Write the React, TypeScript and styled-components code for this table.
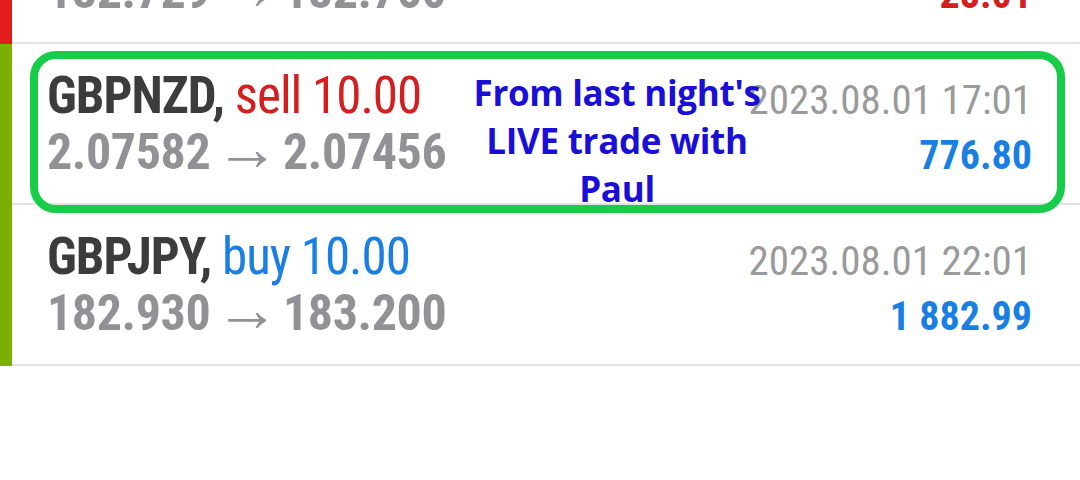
import React from 'react';
import styled, { createGlobalStyle } from 'styled-components';

const GlobalStyle = createGlobalStyle`
  html, body {
    margin: 0;
    padding: 0;
    background: #ffffff;
  }
  body {
    font-family: Roboto, 'Liberation Sans', sans-serif;
    overflow: hidden;
  }
`;

const Page = styled.div`
  position: relative;
  width: 1080px;
  height: 480px;
  overflow: hidden;
`;

const List = styled.div`
  margin-top: -117px;
`;

const Row = styled.div`
  display: flex;
  height: 161px;
`;

const Bar = styled.div<{ $color: string }>`
  width: 12px;
  flex: none;
  background: ${(p) => p.$color};
`;

const Content = styled.div`
  flex: 1;
  display: flex;
  justify-content: space-between;
  padding: 0 48px 0 35px;
  border-bottom: 2px solid #e3e3e3;
`;

const Left = styled.div`
  padding-top: 24px;
  font-stretch: 75%;
`;

const Right = styled.div`
  padding-top: 28px;
  text-align: right;
  font-stretch: 75%;
`;

const Title = styled.div`
  font-size: 51px;
  line-height: 56px;
  letter-spacing: -1px;
  white-space: nowrap;
`;

const Symbol = styled.span`
  font-weight: 700;
  color: #3c3c3c;
`;

const Side = styled.span<{ $color: string }>`
  font-weight: 400;
  color: ${(p) => p.$color};
`;

const Prices = styled.div`
  height: 56px;
  font-size: 50px;
  line-height: 56px;
  font-weight: 700;
  letter-spacing: -0.4px;
  color: #929296;
  white-space: nowrap;
`;

const Arrow = styled.span`
  font-weight: 400;
  font-stretch: 100%;
  font-size: 64px;
  line-height: 40px;
  margin: 0 4px 0 5px;
  vertical-align: -1px;
`;

const Time = styled.div`
  font-size: 41px;
  line-height: 56px;
  color: #9a9a9a;
  white-space: nowrap;
`;

const Profit = styled.div<{ $color: string }>`
  font-size: 40px;
  line-height: 56px;
  font-weight: 700;
  color: ${(p) => p.$color};
  white-space: nowrap;
`;

const Highlight = styled.div`
  position: absolute;
  left: 30px;
  top: 51px;
  width: 1035px;
  height: 162px;
  box-sizing: border-box;
  border: 8px solid #17cc48;
  border-radius: 26px;
  pointer-events: none;
`;

const Note = styled.div`
  position: absolute;
  left: 467px;
  top: 69px;
  width: 300px;
  text-align: center;
  font-family: 'Open Sans', 'Noto Sans', sans-serif;
  font-weight: 700;
  font-size: 35px;
  line-height: 48px;
  letter-spacing: -0.3px;
  color: #1a0fd6;
  white-space: nowrap;
`;

const RED = '#d22020';
const BLUE = '#1a7fe2';

const trades = [
  {
    symbol: 'GBPJPY',
    side: 'sell',
    volume: '10.00',
    open: '182.729',
    close: '182.760',
    time: '2023.08.01 14:27',
    profit: '-28.01',
    bar: '#e21b1b',
  },
  {
    symbol: 'GBPNZD',
    side: 'sell',
    volume: '10.00',
    open: '2.07582',
    close: '2.07456',
    time: '2023.08.01 17:01',
    profit: '776.80',
    bar: '#7cb000',
  },
  {
    symbol: 'GBPJPY',
    side: 'buy',
    volume: '10.00',
    open: '182.930',
    close: '183.200',
    time: '2023.08.01 22:01',
    profit: '1 882.99',
    bar: '#7cb000',
  },
];

export default function App() {
  return (
    <Page>
      <GlobalStyle />
      <List>
        {trades.map((t) => (
          <Row key={t.time}>
            <Bar $color={t.bar} />
            <Content>
              <Left>
                <Title>
                  <Symbol>{t.symbol},</Symbol>{' '}
                  <Side $color={t.side === 'buy' ? BLUE : RED}>
                    {t.side} {t.volume}
                  </Side>
                </Title>
                <Prices>
                  {t.open}
                  <Arrow>→</Arrow>
                  {t.close}
                </Prices>
              </Left>
              <Right>
                <Time>{t.time}</Time>
                <Profit $color={t.profit.startsWith('-') ? RED : BLUE}>{t.profit}</Profit>
              </Right>
            </Content>
          </Row>
        ))}
      </List>
      <Highlight />
      <Note>
        From last night's
        <br />
        LIVE trade with
        <br />
        Paul
      </Note>
    </Page>
  );
}
